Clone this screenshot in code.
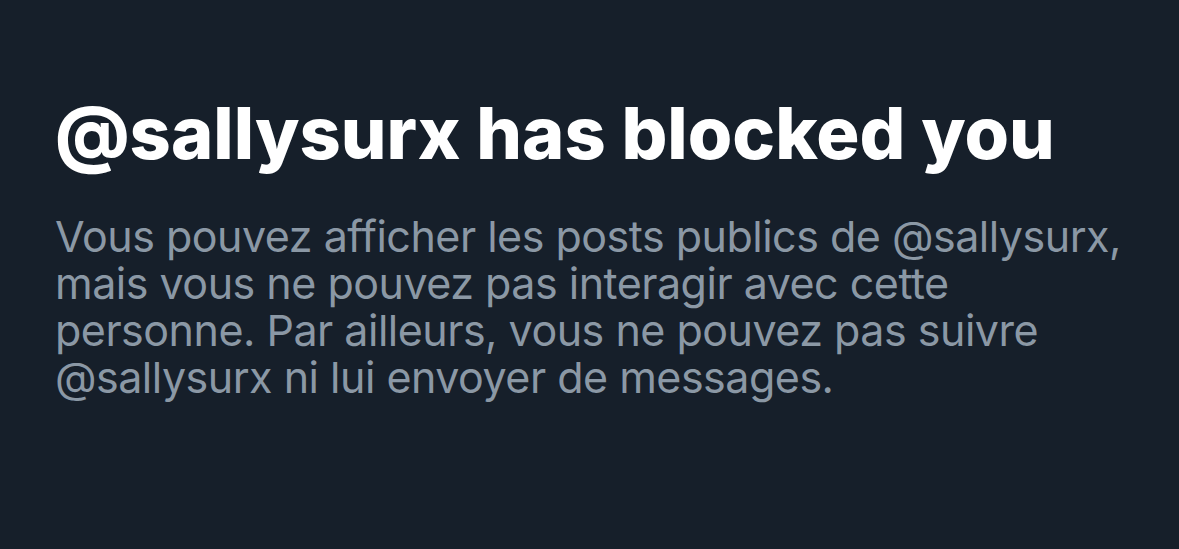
import React from "react";

function BlockedNotice() {
  return (
    <section className="w-[1179px] h-[549px] bg-[#161f2a] pl-[55px] pt-[91px]" style={{ fontFamily: "Inter, 'Noto Sans', sans-serif" }}>
      {/* Title */}
      <h1 className="text-white font-extrabold text-[72px] leading-[84px] tracking-[0px]">
        @sallysurx has blocked you
      </h1>

      {/* Explanation */}
      <p className="mt-[38px] w-[1110px] text-[#8b98a5] text-[43px] leading-[47px] tracking-[-0.5px]">
        Vous pouvez afficher les posts publics de @sallysurx,
        <br />
        mais vous ne pouvez pas interagir avec cette
        <br />
        personne. Par ailleurs, vous ne pouvez pas suivre
        <br />
        @sallysurx ni lui envoyer de messages.
      </p>
    </section>
  );
}

export default function App() {
  return <BlockedNotice />;
}
